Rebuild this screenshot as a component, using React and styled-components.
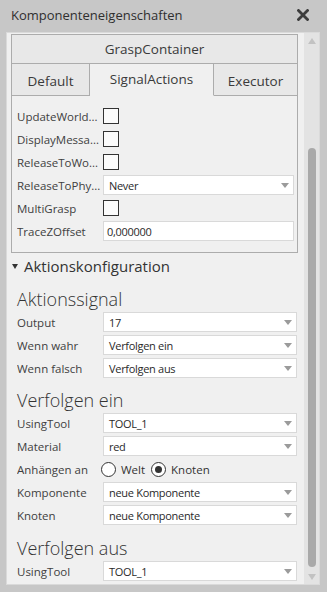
import React from "react";
import styled, { createGlobalStyle } from "styled-components";

const GlobalStyle = createGlobalStyle`
  html, body {
    margin: 0;
    padding: 0;
    background: #c7c7c7;
  }
  body {
    font-family: "Open Sans", "Noto Sans", sans-serif;
    color: #3a3a3a;
  }
`;

const Window = styled.div`
  width: 327px;
  height: 592px;
  display: flex;
  flex-direction: column;
  background: #c7c7c7;
  box-sizing: border-box;
`;

const TitleBar = styled.div`
  height: 32px;
  flex: none;
  display: flex;
  align-items: center;
  justify-content: space-between;
  padding: 0 18px 2px 11px;
  box-sizing: border-box;
  font-size: 13px;
  color: #2f2f2f;
`;

const Panel = styled.div`
  flex: 1;
  min-height: 0;
  margin: 0 7px 7px 6px;
  border: 1px solid #dadada;
  background: #f0f0f0;
  display: grid;
  grid-template-columns: 1fr 15px;
  overflow: hidden;
`;

const Content = styled.div`
  padding: 1px 6px 0 4px;
  overflow: hidden;
  min-width: 0;
`;

const GroupBox = styled.div`
  border: 1px solid #acacac;
`;

const GroupHeader = styled.div`
  height: 28px;
  display: flex;
  align-items: center;
  justify-content: center;
  background: #e8e8e8;
  border-bottom: 1px solid #acacac;
  font-size: 13.5px;
  color: #3a3a3a;
`;

const Tabs = styled.div`
  display: grid;
  grid-template-columns: 78px 124px 1fr;
  height: 32px;
`;

const Tab = styled.div`
  display: flex;
  align-items: center;
  justify-content: center;
  font-size: 13.5px;
  color: #3a3a3a;
  background: ${(p) => (p.$active ? "#f0f0f0" : "#e8e8e8")};
  border-bottom: 1px solid ${(p) => (p.$active ? "transparent" : "#acacac")};
  border-right: ${(p) => (p.$last ? "none" : "1px solid #acacac")};
  padding-top: ${(p) => (p.$active ? "0" : "3px")};
  padding-bottom: ${(p) => (p.$active ? "2px" : "0")};
`;

const GroupBody = styled.div`
  display: flex;
  flex-direction: column;
  gap: 3px;
  padding: 10px 3px 11px 5px;
`;

const Row = styled.div`
  display: grid;
  grid-template-columns: 86px 1fr;
  align-items: center;
  height: 20px;
`;

const Label = styled.div`
  font-size: 11.5px;
  color: #404040;
  white-space: nowrap;
  overflow: hidden;
`;

const CheckBox = styled.div`
  width: 14px;
  height: 14px;
  border: 1px solid #333;
  background: #fbfbfb;
`;

const SelectBox = styled.div`
  height: 20px;
  box-sizing: border-box;
  border: 1px solid #d9d9d9;
  background: #fff;
  display: flex;
  align-items: center;
  justify-content: space-between;
  padding: 0 4px 0 5px;
  font-size: 11px;
  letter-spacing: -0.3px;
  color: #2a2a2a;
`;

const Arrow = styled.span`
  width: 0;
  height: 0;
  border-left: 4px solid transparent;
  border-right: 4px solid transparent;
  border-top: 5px solid #9b9b9b;
`;

const TextBox = styled(SelectBox)`
  padding-left: 3px;
`;

const Expander = styled.div`
  display: flex;
  align-items: center;
  gap: 6px;
  height: 24px;
  margin-top: 1px;
  padding-left: 1px;
  font-size: 15px;
  color: #333;
`;

const Caret = styled.span`
  width: 0;
  height: 0;
  border-left: 3.5px solid transparent;
  border-right: 3.5px solid transparent;
  border-top: 5px solid #333;
`;

const Section = styled.div`
  display: flex;
  flex-direction: column;
  gap: 3px;
  padding: 0 1px 0 6px;
  margin-top: ${(p) => p.$space}px;
`;

const SectionTitle = styled.div`
  font-size: 18px;
  font-weight: 300;
  line-height: 24px;
  color: #333;
  margin-bottom: -2px;
`;

const RadioGroup = styled.div`
  display: flex;
  align-items: center;
  margin-left: -2px;
  font-size: 11.5px;
  color: #333;
`;

const Radio = styled.span`
  width: 13px;
  height: 13px;
  border-radius: 50%;
  border: 1px solid #333;
  background: #fff;
  display: inline-flex;
  align-items: center;
  justify-content: center;
  margin: 0 5px 0 ${(p) => (p.$checked ? "6px" : "0")};
  &::after {
    content: "";
    width: 7px;
    height: 7px;
    border-radius: 50%;
    background: ${(p) => (p.$checked ? "#333" : "transparent")};
  }
`;

const Scrollbar = styled.div`
  background: #e3e3e3;
  display: flex;
  flex-direction: column;
  align-items: center;
`;

const ScrollArrow = styled.span`
  flex: none;
  width: 0;
  height: 0;
  border-left: 4px solid transparent;
  border-right: 4px solid transparent;
  ${(p) =>
    p.$up
      ? "border-bottom: 6px solid #c2c2c2; margin-top: 5px;"
      : "border-top: 6px solid #c2c2c2; margin: 7px 0 5px;"}
`;

const Track = styled.div`
  flex: 1;
  width: 100%;
  display: flex;
  justify-content: center;
  padding: 104px 0 0;
  box-sizing: border-box;
`;

const Thumb = styled.div`
  width: 8px;
  height: 419px;
  border-radius: 4px;
  background: #a9a9a9;
`;

function Select({ value }) {
  return (
    <SelectBox>
      <span>{value}</span>
      <Arrow />
    </SelectBox>
  );
}

function CloseIcon() {
  return (
    <svg width="12" height="12" viewBox="0 0 12 12">
      <path d="M1.5 1.5 L10.5 10.5 M10.5 1.5 L1.5 10.5" stroke="#3c3c3c" strokeWidth="2.8" strokeLinecap="square" />
    </svg>
  );
}

export default function App() {
  return (
    <>
      <GlobalStyle />
      <Window>
        <TitleBar>
          <span>Komponenteneigenschaften</span>
          <CloseIcon />
        </TitleBar>
        <Panel>
          <Content>
            <GroupBox>
              <GroupHeader>GraspContainer</GroupHeader>
              <Tabs>
                <Tab>Default</Tab>
                <Tab $active>SignalActions</Tab>
                <Tab $last>Executor</Tab>
              </Tabs>
              <GroupBody>
                <Row>
                  <Label>UpdateWorld...</Label>
                  <CheckBox />
                </Row>
                <Row>
                  <Label>DisplayMessa...</Label>
                  <CheckBox />
                </Row>
                <Row>
                  <Label>ReleaseToWo...</Label>
                  <CheckBox />
                </Row>
                <Row>
                  <Label>ReleaseToPhy...</Label>
                  <Select value="Never" />
                </Row>
                <Row>
                  <Label>MultiGrasp</Label>
                  <CheckBox />
                </Row>
                <Row>
                  <Label>TraceZOffset</Label>
                  <TextBox>0,000000</TextBox>
                </Row>
              </GroupBody>
            </GroupBox>

            <Expander>
              <Caret />
              <span>Aktionskonfiguration</span>
            </Expander>

            <Section $space={9}>
              <SectionTitle>Aktionssignal</SectionTitle>
              <Row>
                <Label>Output</Label>
                <Select value="17" />
              </Row>
              <Row>
                <Label>Wenn wahr</Label>
                <Select value="Verfolgen ein" />
              </Row>
              <Row>
                <Label>Wenn falsch</Label>
                <Select value="Verfolgen aus" />
              </Row>
            </Section>

            <Section $space={10}>
              <SectionTitle>Verfolgen ein</SectionTitle>
              <Row>
                <Label>UsingTool</Label>
                <Select value="TOOL_1" />
              </Row>
              <Row>
                <Label>Material</Label>
                <Select value="red" />
              </Row>
              <Row>
                <Label>Anhängen an</Label>
                <RadioGroup>
                  <Radio />
                  <span>Welt</span>
                  <Radio $checked />
                  <span>Knoten</span>
                </RadioGroup>
              </Row>
              <Row>
                <Label>Komponente</Label>
                <Select value="neue Komponente" />
              </Row>
              <Row>
                <Label>Knoten</Label>
                <Select value="neue Komponente" />
              </Row>
            </Section>

            <Section $space={11}>
              <SectionTitle>Verfolgen aus</SectionTitle>
              <Row>
                <Label>UsingTool</Label>
                <Select value="TOOL_1" />
              </Row>
            </Section>
          </Content>
          <Scrollbar>
            <ScrollArrow $up />
            <Track>
              <Thumb />
            </Track>
            <ScrollArrow />
          </Scrollbar>
        </Panel>
      </Window>
    </>
  );
}
